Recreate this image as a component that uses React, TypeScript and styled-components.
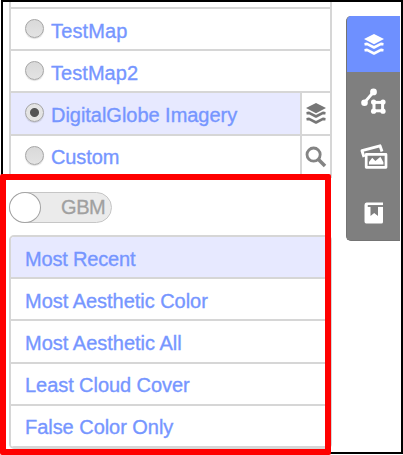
import React from "react";
import styled, { createGlobalStyle } from "styled-components";

const GlobalStyle = createGlobalStyle`
  * { box-sizing: border-box; }
  body {
    margin: 0;
    background: #fff;
    font-family: "Liberation Sans", Arial, sans-serif;
    overflow: hidden;
  }
`;

const Page = styled.div`
  position: relative;
  width: 403px;
  height: 455px;
  padding: 0 0 1px 1px;
`;

const Frame = styled.div`
  display: flex;
  align-items: flex-start;
  width: 402px;
  height: 454px;
  border: 2px solid #000;
  overflow: hidden;
`;

const Panel = styled.main`
  width: 323px;
  margin-left: 6px;
  flex: none;
`;

const MapList = styled.div`
  height: 176px;
  border: solid #d6d6d6;
  border-width: 0 2px;
  padding-top: 5px;
  overflow: hidden;
`;

const MapRow = styled.div<{ $active?: boolean }>`
  display: flex;
  height: 42.2px;
  border-top: 2px solid #d6d6d6;
  background: ${(p) => (p.$active ? "#e7e9ff" : "#fff")};
`;

const RowMain = styled.div`
  flex: 1;
  display: flex;
  align-items: center;
  padding: 3px 0 0 14px;
`;

const Radio = styled.span<{ $on?: boolean }>`
  width: 19px;
  height: 19px;
  margin: -2px 7px 2px 0;
  border: 1.5px solid #a5a5a5;
  border-radius: 50%;
  box-shadow: 0 1px 1px #0002;
  background: ${(p) =>
    p.$on
      ? "radial-gradient(circle, #555 0 4px, #e4e4e4 5px)"
      : "linear-gradient(#d9d9d9, #e3e3e3)"};
`;

const Label = styled.span<{ $spacing?: number }>`
  color: #7696ff;
  font-size: 20px;
  line-height: 24px;
  white-space: nowrap;
  letter-spacing: ${(p) => p.$spacing ?? 0}px;
  -webkit-text-stroke: 0.35px #7696ff;
`;

const RowAction = styled.div`
  width: 30px;
  flex: none;
  display: flex;
  align-items: center;
  justify-content: center;
  padding-top: 2px;
  border-left: 2px solid #d6d6d6;
  background: #fff;
`;

const Switch = styled.div`
  display: flex;
  align-items: center;
  width: 103px;
  height: 31px;
  margin: 14px 0 12px;
  border: 1px solid #c6c6c6;
  border-radius: 16px;
  background: #ebebeb;
`;

const Knob = styled.span`
  width: 32px;
  height: 31px;
  margin-left: -1px;
  border: 1.5px solid #a3a3a3;
  border-radius: 50%;
  background: #fff;
`;

const SwitchText = styled.span`
  margin: -1px 0 0 20px;
  color: #a0a0a0;
  font-size: 20px;
  letter-spacing: -0.4px;
  -webkit-text-stroke: 0.3px #a0a0a0;
`;

const FilterList = styled.div`
  border: 2px solid #d6d6d6;
  border-radius: 5px;
  overflow: hidden;
  height: 214px;
`;

const FilterRow = styled.div<{ $active?: boolean }>`
  display: flex;
  align-items: center;
  height: 42.2px;
  padding: 3px 0 0 14px;
  border-bottom: 2px solid #d6d6d6;
  background: ${(p) => (p.$active ? "#e7e9ff" : "#fff")};
`;

const Toolbar = styled.nav`
  flex: none;
  width: 54px;
  height: 225px;
  margin: 14px 0 0 14px;
  border: solid #747474;
  border-width: 0 0 1px 1px;
  border-radius: 5px 0 0 5px;
  background: #7f7f7f;
  overflow: hidden;
`;

const Tool = styled.div<{ $active?: boolean }>`
  display: flex;
  align-items: center;
  justify-content: center;
  height: 56px;
  padding-top: ${(p) => (p.$active ? 2 : 1)}px;
  margin-left: ${(p) => (p.$active ? -1 : 0)}px;
  padding-left: ${(p) => (p.$active ? 2 : 0)}px;
  background: ${(p) => (p.$active ? "#6e90ff" : "#7f7f7f")};
`;

const Highlight = styled.div`
  position: absolute;
  left: 0;
  top: 174px;
  width: 331px;
  height: 281px;
  border: 6px solid #f00;
  border-radius: 2px;
  pointer-events: none;
`;

const Layers = ({ color }: { color: string }) => (
  <svg width="22" height="24" viewBox="0 0 22 24" fill={color}>
    <path d="M11 1 21 6.1 11 11.2 1 6.1Z" />
    <path
      d="M1.5 11.2 4 10.900 11 14.500 18 10.900 20.500 11.200M1.500 17.200 4 16.900 11 20.500 18 16.900 20.500 17.200"
      fill="none"
      stroke={color}
      strokeWidth="2.6"
      strokeLinejoin="round"
    />
  </svg>
);

const Search = () => (
  <svg width="22" height="22" viewBox="0 0 22 22" fill="none" stroke="#848484">
    <circle cx="8.6" cy="8.6" r="6.6" strokeWidth="2.8" />
    <path d="m13.5 13.5 6.5 6.5" strokeWidth="3.6" />
  </svg>
);

const Vector = () => (
  <svg width="26" height="26" viewBox="0 0 26 26" fill="#fff" stroke="#fff">
    <path d="M3.5 14.5 12.5 4" strokeWidth="2.8" />
    <g stroke="none">
      <circle cx="3.5" cy="14.8" r="3.3" />
      <circle cx="12.5" cy="3.9" r="3.4" />
      <circle cx="12.6" cy="14" r="2.6" />
      <circle cx="22" cy="14" r="2.6" />
      <circle cx="12.6" cy="23.2" r="2.6" />
      <circle cx="22" cy="23.2" r="2.6" />
    </g>
    <rect x="13" y="14.4" width="8.6" height="8.4" fill="none" strokeWidth="3" />
  </svg>
);

const Pictures = () => (
  <svg width="28" height="26" viewBox="0 0 28 26" fill="none" stroke="#fff">
    <path d="M4 13 2 6.700 20 1.800 22 7.500" strokeWidth="2.9" strokeLinejoin="round" />
    <rect x="6.2" y="10.4" width="19.8" height="12.9" strokeWidth="2.7" strokeLinejoin="round" />
    <path d="M9 20.500v-2.600l3.200-4.200 3.200 3.400 5-4.400 3 5.500V20.500Z" fill="#fff" stroke="none" />
  </svg>
);

const Bookmark = () => (
  <svg width="20" height="22" viewBox="0 0 20 22">
    <path
      d="M2.500 .5H19V3.200H4V4.800H19V20q0 1.500-1.500 1.500H2.200Q.5 21.500 .5 19.500V3Q.5 .5 2.500 .5Z"
      fill="#fff"
    />
    <path d="M3.700 3.200H19V4.800H14V14L10.200 11L6.500 14V4.800H3.700Z" fill="#7f7f7f" />
  </svg>
);

const maps = [
  { name: "TestMap", spacing: 0.15 },
  { name: "TestMap2", spacing: 0.05 },
  { name: "DigitalGlobe Imagery", spacing: -0.03, selected: true, action: <Layers color="#777" /> },
  { name: "Custom", spacing: -0.1, action: <Search /> },
];

const filters = [
  { name: "Most Recent", spacing: -0.17 },
  { name: "Most Aesthetic Color", spacing: -0.03 },
  { name: "Most Aesthetic All", spacing: 0 },
  { name: "Least Cloud Cover", spacing: -0.06 },
  { name: "False Color Only", spacing: -0.04 },
];

export default function App() {
  return (
    <Page>
      <GlobalStyle />
      <Frame>
        <Panel>
          <MapList>
            {maps.map((m) => (
              <MapRow key={m.name} $active={m.selected}>
                <RowMain>
                  <Radio $on={m.selected} />
                  <Label $spacing={m.spacing}>{m.name}</Label>
                </RowMain>
                {m.action && <RowAction>{m.action}</RowAction>}
              </MapRow>
            ))}
          </MapList>
          <Switch>
            <Knob />
            <SwitchText>GBM</SwitchText>
          </Switch>
          <FilterList>
            {filters.map((f, i) => (
              <FilterRow key={f.name} $active={i === 0}>
                <Label $spacing={f.spacing}>{f.name}</Label>
              </FilterRow>
            ))}
          </FilterList>
        </Panel>
        <Toolbar>
          <Tool $active>
            <Layers color="#fff" />
          </Tool>
          <Tool>
            <Vector />
          </Tool>
          <Tool>
            <Pictures />
          </Tool>
          <Tool>
            <Bookmark />
          </Tool>
        </Toolbar>
      </Frame>
      <Highlight />
    </Page>
  );
}
